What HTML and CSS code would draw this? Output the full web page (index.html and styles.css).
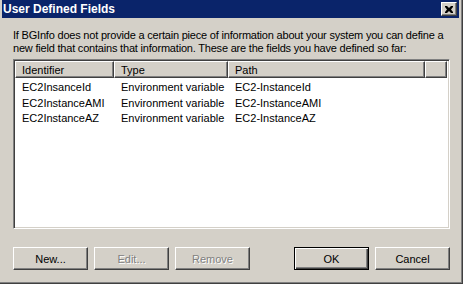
FILE: index.html
```html
<!DOCTYPE html>
<html lang="en">
<head>
    <meta charset="UTF-8">
    <title>User Defined Fields</title>
    <link rel="stylesheet" href="styles.css">
</head>
<body>
    <div class="window">
        <div class="titlebar">
            <span class="title">User Defined Fields</span>
            <div class="close">
                <svg width="8" height="7" viewBox="0 0 8 7">
                    <path d="M0 0h2l2 2 2-2h2v1L6 3.5 8 6v1H6L4 5 2 7H0V6l2-2.5L0 1z" fill="#000"/>
                </svg>
            </div>
        </div>

        <div class="content">
            <p class="intro">If BGInfo does not provide a certain piece of information about your system you can define a<br>new field that contains that information. These are the fields you have defined so far:</p>

            <div class="listbox">
                <div class="header">
                    <div class="col col-id">Identifier</div>
                    <div class="col col-type">Type</div>
                    <div class="col col-path">Path</div>
                    <div class="col col-rest"></div>
                </div>
                <div class="row">
                    <div class="cell col-id">EC2InsanceId</div>
                    <div class="cell col-type">Environment variable</div>
                    <div class="cell col-path">EC2-InstanceId</div>
                </div>
                <div class="row">
                    <div class="cell col-id">EC2InstanceAMI</div>
                    <div class="cell col-type">Environment variable</div>
                    <div class="cell col-path">EC2-InstanceAMI</div>
                </div>
                <div class="row">
                    <div class="cell col-id">EC2InstanceAZ</div>
                    <div class="cell col-type">Environment variable</div>
                    <div class="cell col-path">EC2-InstanceAZ</div>
                </div>
            </div>

            <div class="buttons">
                <button class="btn">New...</button>
                <button class="btn" disabled>Edit...</button>
                <button class="btn" disabled>Remove</button>
                <div class="spacer"></div>
                <button class="btn default">OK</button>
                <button class="btn">Cancel</button>
            </div>
        </div>
    </div>
</body>
</html>
```

FILE: styles.css
```css
html, body {
    margin: 0;
    height: 100%;
}

body {
    background: #d4d0c8;
    font-family: "Liberation Sans", Arial, sans-serif;
    font-size: 11px;
    color: #000000;
}

.window {
    width: 463px;
    height: 284px;
    box-sizing: border-box;
    padding: 0 3px 3px 2px;
    border-right: 1px solid #404040;
    border-bottom: 1px solid #404040;
    box-shadow: inset -1px -1px 0 #808080;
    display: flex;
    flex-direction: column;
}

.titlebar {
    height: 18px;
    flex: none;
    background: #0a246a;
    display: flex;
    align-items: center;
    justify-content: space-between;
    padding: 0 2px 0 1px;
}

.title {
    color: #ffffff;
    font-weight: bold;
    font-size: 12px;
}

.close {
    width: 16px;
    height: 14px;
    box-sizing: border-box;
    background: #d4d0c8;
    border-top: 1px solid #ffffff;
    border-left: 1px solid #ffffff;
    border-right: 1px solid #404040;
    border-bottom: 1px solid #404040;
    box-shadow: inset -1px -1px 0 #808080;
    display: flex;
    align-items: center;
    justify-content: center;
}

.content {
    flex: 1;
    display: flex;
    flex-direction: column;
    padding: 11px 9px 0 11px;
}

.intro {
    margin: 0;
    line-height: 13px;
    letter-spacing: -0.2px;
    white-space: nowrap;
}

.listbox {
    margin-top: 4px;
    height: 170px;
    box-sizing: border-box;
    flex: none;
    background: #ffffff;
    border-top: 1px solid #808080;
    border-left: 1px solid #808080;
    border-right: 1px solid #ffffff;
    border-bottom: 1px solid #ffffff;
    box-shadow: inset 1px 1px 0 #404040, inset -1px -1px 0 #d4d0c8;
    padding: 1px 2px 0 1px;
}

.header {
    display: flex;
    height: 17px;
}

.col {
    box-sizing: border-box;
    height: 17px;
    background: #d4d0c8;
    border-top: 1px solid #ffffff;
    border-left: 1px solid #ffffff;
    border-right: 1px solid #404040;
    border-bottom: 1px solid #404040;
    box-shadow: inset -1px -1px 0 #808080;
    padding: 2px 0 0 6px;
    white-space: nowrap;
}

.col-id {
    width: 99px;
}

.col-type {
    width: 114px;
}

.col-path {
    width: 197px;
}

.col-rest {
    flex: 1;
}

.row {
    display: flex;
    height: 15.5px;
    line-height: 15px;
}

.header + .row {
    margin-top: 2px;
}

.cell {
    box-sizing: border-box;
    padding-left: 7px;
    white-space: nowrap;
}

.buttons {
    display: flex;
    gap: 6px;
    margin-top: 18px;
}

.spacer {
    flex: 1;
}

.btn {
    width: 75px;
    height: 23px;
    box-sizing: border-box;
    margin: 0;
    padding: 0;
    background: #d4d0c8;
    font-family: inherit;
    font-size: 11px;
    color: #000000;
    border-top: 1px solid #ffffff;
    border-left: 1px solid #ffffff;
    border-right: 1px solid #404040;
    border-bottom: 1px solid #404040;
    box-shadow: inset -1px -1px 0 #808080;
}

.btn:disabled {
    color: #808080;
    text-shadow: 1px 1px 0 #ffffff;
}

.btn.default {
    border: 1px solid #000000;
    box-shadow: inset 1px 1px 0 #ffffff, inset -1px -1px 0 #404040, inset -2px -2px 0 #808080;
}
```
